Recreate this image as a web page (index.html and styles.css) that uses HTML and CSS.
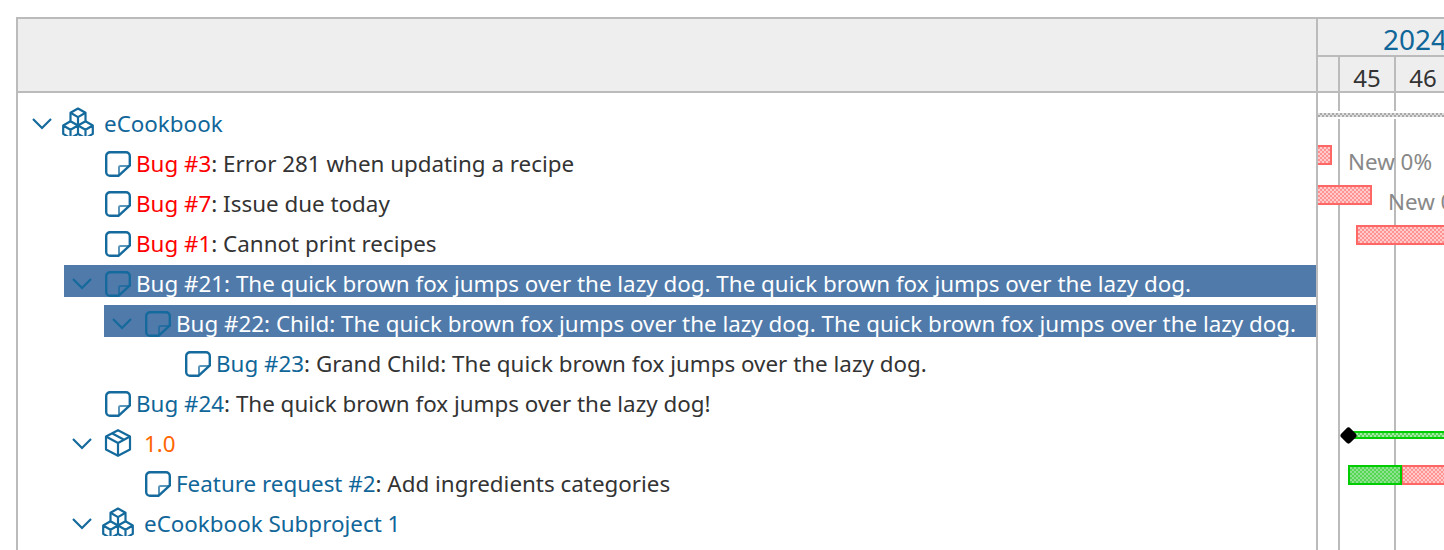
FILE: index.html
```html
<!DOCTYPE html>
<html lang="en">
<head>
  <meta charset="UTF-8">
  <title>Gantt</title>
  <link rel="stylesheet" href="styles.css">
</head>
<body>
  <svg class="sprites" width="0" height="0">
    <symbol id="chevron" viewBox="0 0 20 20">
      <path d="M1 5l9 9 9-9" fill="none" stroke="currentColor" stroke-width="2.200"/>
    </symbol>
    <symbol id="note" viewBox="0 0 26 26">
      <path d="M5 1.200h16a3.800 3.800 0 0 1 3.800 3.800v9.500L13.500 24.800H5A3.800 3.800 0 0 1 1.200 21V5A3.800 3.800 0 0 1 5 1.200z" fill="none" stroke="currentColor" stroke-width="2.400"/>
      <path d="M14 24V16.500a1.500 1.500 0 0 1 1.500-1.500h9" fill="none" stroke="currentColor" stroke-width="2" opacity=".7"/>
    </symbol>
    <symbol id="projects" viewBox="0 0 32 29">
      <g fill="none" stroke="currentColor" stroke-width="2.200" stroke-linejoin="round">
        <path d="M16 1.500l7.500 4.300v8.400L16 18.500l-7.500-4.300V5.800z"/>
        <path d="M8.500 5.800l7.500 4.300 7.500-4.300M16 10.100v8.400"/>
        <path d="M8.500 14.200L1.200 18.500v8.400l7.300 4.200 7.500-4.200v-8.400M1.200 18.500l7.300 4.200 7.500-4.200M8.500 22.700v8"/>
        <path d="M23.500 14.200l7.300 4.300v8.400l-7.300 4.200-7.500-4.200M16 18.500l7.500 4.200 7.300-4.200M23.500 22.700v8"/>
      </g>
    </symbol>
    <symbol id="package" viewBox="0 0 28 28">
      <g fill="none" stroke="currentColor" stroke-width="2.200" stroke-linejoin="round">
        <path d="M14 1.200l12 6.300v13l-12 6.300-12-6.300v-13z"/>
        <path d="M2 7.500L14 14l12-6.500M14 14v12.800M8 4.300l12 6.500"/>
      </g>
    </symbol>
  </svg>

  <div class="gantt">
    <div class="subjects">
      <div class="subjects-head"></div>
      <div class="tree">
        <div class="row lvl-0">
          <svg class="chevron"><use href="#chevron"/></svg>
          <svg class="icon-projects"><use href="#projects"/></svg>
          <span class="name"><a>eCookbook</a></span>
        </div>
        <div class="row lvl-1 issue">
          <svg class="chevron hidden"></svg>
          <svg class="icon-note"><use href="#note"/></svg>
          <span class="name"><a class="bug">Bug #3</a>: Error 281 when updating a recipe</span>
        </div>
        <div class="row lvl-1 issue">
          <svg class="chevron hidden"></svg>
          <svg class="icon-note"><use href="#note"/></svg>
          <span class="name"><a class="bug">Bug #7</a>: Issue due today</span>
        </div>
        <div class="row lvl-1 issue">
          <svg class="chevron hidden"></svg>
          <svg class="icon-note"><use href="#note"/></svg>
          <span class="name"><a class="bug">Bug #1</a>: Cannot print recipes</span>
        </div>
        <div class="row lvl-1 issue selected">
          <svg class="chevron"><use href="#chevron"/></svg>
          <svg class="icon-note"><use href="#note"/></svg>
          <span class="name"><a>Bug #21</a>: The quick brown fox jumps over the lazy dog. The quick brown fox jumps over the lazy dog.</span>
        </div>
        <div class="row lvl-2 issue selected">
          <svg class="chevron"><use href="#chevron"/></svg>
          <svg class="icon-note"><use href="#note"/></svg>
          <span class="name"><a>Bug #22</a>: Child: The quick brown fox jumps over the lazy dog. The quick brown fox jumps over the lazy dog.</span>
        </div>
        <div class="row lvl-3 issue">
          <svg class="chevron hidden"></svg>
          <svg class="icon-note"><use href="#note"/></svg>
          <span class="name"><a>Bug #23</a>: Grand Child: The quick brown fox jumps over the lazy dog.</span>
        </div>
        <div class="row lvl-1 issue">
          <svg class="chevron hidden"></svg>
          <svg class="icon-note"><use href="#note"/></svg>
          <span class="name"><a>Bug #24</a>: The quick brown fox jumps over the lazy dog!</span>
        </div>
        <div class="row lvl-1">
          <svg class="chevron"><use href="#chevron"/></svg>
          <svg class="icon-package"><use href="#package"/></svg>
          <span class="name"><a class="version">1.0</a></span>
        </div>
        <div class="row lvl-2 issue">
          <svg class="chevron hidden"></svg>
          <svg class="icon-note"><use href="#note"/></svg>
          <span class="name"><a>Feature request #2</a>: Add ingredients categories</span>
        </div>
        <div class="row lvl-1">
          <svg class="chevron"><use href="#chevron"/></svg>
          <svg class="icon-projects"><use href="#projects"/></svg>
          <span class="name"><a>eCookbook Subproject 1</a></span>
        </div>
      </div>
    </div>

    <div class="chart">
      <div class="chart-head">
        <div class="year">2024</div>
        <div class="weeks">
          <div class="week week-first"></div>
          <div class="week">45</div>
          <div class="week">46</div>
          <div class="week"></div>
        </div>
      </div>
      <div class="canvas">
        <div class="grid">
          <div class="grid-col grid-first"></div>
          <div class="grid-col"></div>
          <div class="grid-col"></div>
        </div>
        <div class="bar-row">
          <div class="project-bar"></div>
        </div>
        <div class="bar-row">
          <div class="bar todo" style="left: -4px; width: 18px"></div>
          <span class="bar-label" style="left: 30px">New 0%</span>
        </div>
        <div class="bar-row">
          <div class="bar todo" style="left: -4px; width: 58px"></div>
          <span class="bar-label" style="left: 70px">New 0%</span>
        </div>
        <div class="bar-row">
          <div class="bar todo" style="left: 38px; width: 110px"></div>
        </div>
        <div class="bar-row"></div>
        <div class="bar-row"></div>
        <div class="bar-row"></div>
        <div class="bar-row"></div>
        <div class="bar-row">
          <div class="version-bar" style="left: 30px; width: 120px"></div>
          <div class="diamond" style="left: 23.500px"></div>
        </div>
        <div class="bar-row">
          <div class="bar todo" style="left: 83px; width: 60px"></div>
          <div class="bar done" style="left: 30px; width: 54px"></div>
        </div>
        <div class="bar-row"></div>
      </div>
    </div>
  </div>
</body>
</html>
```

FILE: styles.css
```css
html, body {
  height: 100%;
  margin: 0;
  overflow: hidden;
}
body {
  background: #fff;
  color: #333;
  font-family: "Noto Sans", sans-serif;
  font-size: 22.4px;
  padding: 17px 0 0 16px;
  box-sizing: border-box;
}
.sprites {
  position: absolute;
}
.gantt {
  display: flex;
  height: 600px;
  border-top: 2px solid #bbb;
  border-left: 2px solid #bbb;
}
a {
  color: #169;
}

/* left side */
.subjects {
  width: 1298px;
  flex-shrink: 0;
}
.subjects-head {
  height: 72px;
  background: #eee;
  border-bottom: 2px solid #bbb;
}
.tree {
  display: flex;
  flex-direction: column;
  gap: 8px;
  padding-top: 12px;
}
.row {
  display: flex;
  align-items: center;
  height: 32px;
  box-sizing: border-box;
  padding-top: 4px;
  white-space: nowrap;
}
.lvl-0 { margin-left: 6px; }
.lvl-1 { margin-left: 46px; }
.lvl-2 { margin-left: 86px; }
.lvl-3 { margin-left: 126px; }
.chevron {
  width: 20px;
  height: 20px;
  margin: 2px 8px 0;
  flex-shrink: 0;
  color: #146a9c;
}
.chevron.hidden {
  visibility: hidden;
}
.icon-note {
  width: 26px;
  height: 26px;
  margin: 2px 5px 0;
  flex-shrink: 0;
  color: #146a9c;
}
.icon-projects {
  width: 32px;
  height: 29px;
  margin: -3px 10px 0 2px;
  flex-shrink: 0;
  color: #146a9c;
}
.icon-package {
  width: 28px;
  height: 28px;
  margin-left: 4px;
  margin-right: 12px;
  flex-shrink: 0;
  color: #146a9c;
}
.bug {
  color: #f00;
}
.version {
  color: #f60;
}
.selected {
  background: #507aaa;
  color: #fff;
}
.selected a {
  color: #fff;
}

/* right side */
.chart {
  flex: 1;
  min-width: 0;
  overflow: hidden;
  border-left: 2px solid #bbb;
}
.chart-head {
  background: #eee;
  border-bottom: 2px solid #bbb;
  height: 72px;
}
.year {
  height: 36px;
  line-height: 40px;
  padding-left: 65px;
  font-size: 28px;
  color: #169;
  border-bottom: 2px solid #bbb;
  white-space: nowrap;
}
.weeks {
  display: flex;
  height: 34px;
}
.week {
  width: 54px;
  flex-shrink: 0;
  border-right: 2px solid #bbb;
  text-align: center;
  font-size: 24px;
  line-height: 42px;
}
.week-first {
  width: 20px;
}
.canvas {
  position: relative;
  min-height: 500px;
  box-sizing: border-box;
  padding-top: 11px;
}
.grid {
  position: absolute;
  top: 0;
  left: 0;
  bottom: 0;
  display: flex;
}
.grid-col {
  width: 54px;
  border-right: 2px solid #bbb;
}
.grid-first {
  width: 20px;
}
.bar-row {
  position: relative;
  height: 40px;
}
.bar {
  position: absolute;
  top: 1px;
  height: 20px;
  box-sizing: border-box;
  border: 2px solid;
  background-size: 4px 4px;
}
.todo {
  border-color: #f66;
  background-image: conic-gradient(#ff9292 25%, #ffcaca 0 50%, #ff9292 0 75%, #ffcaca 0);
}
.done {
  border-color: #0c0;
  background-image: conic-gradient(#55d655 25%, #8ee48e 0 50%, #55d655 0 75%, #8ee48e 0);
}
.bar-label {
  position: absolute;
  top: 2px;
  color: #888;
  white-space: nowrap;
}
.project-bar {
  position: absolute;
  top: 9px;
  left: 0;
  width: 130px;
  height: 4px;
  box-shadow: 0 0 0 2px #fff;
  background-image: conic-gradient(#aaa 25%, #ddd 0 50%, #aaa 0 75%, #ddd 0);
  background-size: 4px 4px;
}
.version-bar {
  position: absolute;
  top: 7px;
  height: 8px;
  box-sizing: border-box;
  border-top: 2px solid #0c0;
  border-bottom: 2px solid #0c0;
  background-image: conic-gradient(#55d655 25%, #a3e8a3 0 50%, #55d655 0 75%, #a3e8a3 0);
  background-size: 4px 4px;
}
.diamond {
  position: absolute;
  top: 4.500px;
  width: 13px;
  height: 13px;
  background: #000;
  transform: rotate(45deg);
  border-radius: 3px;
}
```
